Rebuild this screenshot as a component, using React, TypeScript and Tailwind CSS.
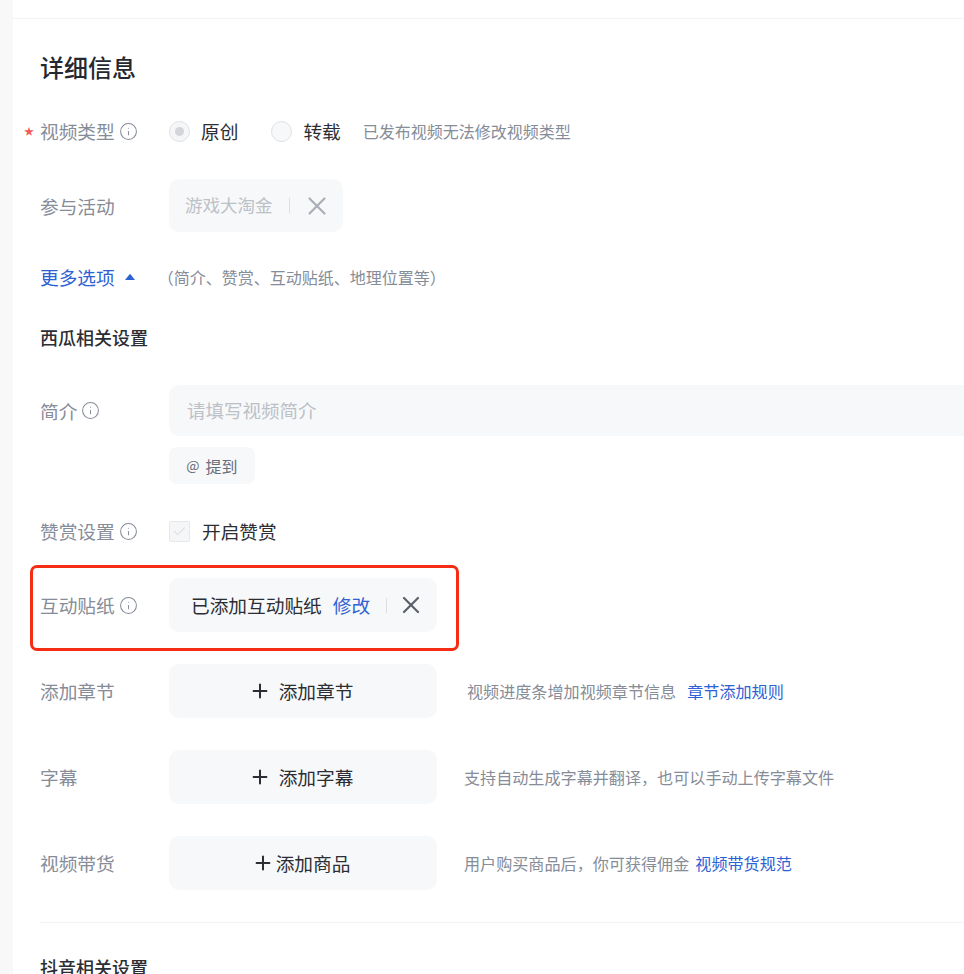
import { Check, Info, Plus, X } from 'lucide-react'
import type { ReactNode } from 'react'

const font = '[font-family:"Noto_Sans_CJK_SC","Liberation_Sans",sans-serif]'

function FieldLabel({ text, info }: { text: string; info?: boolean }) {
  return (
    <div className="flex w-[129px] shrink-0 items-center text-[18.7px] leading-6 text-[#868c98]">
      <span>{text}</span>
      {info && <Info className="ml-[4px] text-[#868c98]" size={19} strokeWidth={1.3} />}
    </div>
  )
}

function Divider() {
  return <span className="block h-[15px] w-px bg-[#dcdfe4]" />
}

function AddRow({
  label,
  action,
  tight,
  hintClass,
  children,
}: {
  label: string
  action: string
  tight?: boolean
  hintClass: string
  children: ReactNode
}) {
  return (
    <div className="flex h-[54px] items-center">
      <FieldLabel text={label} />
      <div className="flex h-[54px] w-[268px] shrink-0 items-center justify-center rounded-[10px] bg-[#f7f8f9] pr-[4px] text-[18.7px] text-[#2b2e34]">
        <Plus className={tight ? 'mr-[2px]' : 'mr-[8px]'} size={22} strokeWidth={2.2} />
        <span>{action}</span>
      </div>
      <div className={`flex items-center text-[16.1px] text-[#868c98] ${hintClass}`}>{children}</div>
    </div>
  )
}

export default function App() {
  return (
    <div className={`flex h-[974px] w-[964px] overflow-hidden bg-white ${font}`}>
      <div className="w-[13px] shrink-0 bg-[#f8f8f9]" />
      <div className="min-w-0 flex-1">
        <div className="h-[19px] border-b border-[#f2f3f5]" />
        <div className="pl-[27px]">
          <h1 className="mt-[31px] h-[34px] text-[24px] leading-[34px] font-medium text-[#25282e]">详细信息</h1>

          <div className="relative mt-[32px] flex h-[30px] items-center">
            <span className="absolute -left-[16px] top-[8px] text-[10px] leading-[14px] text-[#f25c5c]">★</span>
            <FieldLabel text="视频类型" info />
            <span className="flex h-[21px] w-[21px] items-center justify-center rounded-full border border-[#dfe1e5] bg-[#f5f6f8]">
              <span className="h-[9px] w-[9px] rounded-full bg-[#d3d5d9]" />
            </span>
            <span className="ml-[11px] text-[18.7px] text-[#2b2e34]">原创</span>
            <span className="ml-[33px] h-[21px] w-[21px] rounded-full border border-[#dfe1e5] bg-[#f7f8f9]" />
            <span className="ml-[11px] text-[18.7px] text-[#2b2e34]">转载</span>
            <span className="ml-[22px] text-[16px] text-[#868c98]">已发布视频无法修改视频类型</span>
          </div>

          <div className="mt-[33px] flex h-[53px] items-center">
            <FieldLabel text="参与活动" />
            <div className="flex h-[53px] w-[174px] items-center rounded-[10px] bg-[#f7f8f9] pl-[16px] text-[#bcc0c7]">
              <span className="text-[17.5px]">游戏大淘金</span>
              <span className="ml-[16px]"><Divider /></span>
              <X className="ml-[12px] text-[#a9aeb7]" size={30} strokeWidth={1.7} />
            </div>
          </div>

          <div className="mt-[33px] flex h-[24px] items-center">
            <span className="text-[18.7px] leading-6 text-[#2d62d4]">更多选项</span>
            <svg className="ml-[9px]" width="12" height="8" viewBox="0 0 12 8">
              <path d="M6 .8 11 7H1Z" fill="#2d62d4" />
            </svg>
            <span className="ml-[22px] text-[16px] text-[#868c98]">（简介、赞赏、互动贴纸、地理位置等）</span>
          </div>

          <h2 className="mt-[36px] h-[24px] text-[18px] leading-6 font-medium text-[#2b2e34]">西瓜相关设置</h2>

          <div className="mt-[36px] flex h-[51px] items-center">
            <FieldLabel text="简介" info />
            <div className="flex h-[51px] flex-1 items-center rounded-l-[10px] bg-[#f7f8f9] pl-[18px] text-[18.5px] text-[#bcc0c7]">
              请填写视频简介
            </div>
          </div>

          <div className="mt-[11px] ml-[129px] flex h-[37px] w-[86px] items-center justify-center rounded-[8px] bg-[#f7f8f9] text-[16px] text-[#686e7a]">
            <span className="mr-[6px] text-[14px]">@</span>
            <span>提到</span>
          </div>

          <div className="mt-[33px] flex h-[28px] items-center">
            <FieldLabel text="赞赏设置" info />
            <span className="flex h-[21px] w-[21px] items-center justify-center rounded-[2px] border border-[#e6e8eb] bg-[#f5f6f8]">
              <Check className="text-[#e0e2e6]" size={15} strokeWidth={2} />
            </span>
            <span className="ml-[12px] text-[18.7px] text-[#2b2e34]">开启赞赏</span>
          </div>

          <div className="relative mt-[33px] flex h-[54px] items-center">
            <FieldLabel text="互动贴纸" info />
            <div className="flex h-[54px] w-[268px] items-center rounded-[10px] bg-[#f7f8f9] pl-[22px] text-[18.7px] text-[#2b2e34]">
              <span>已添加互动贴纸</span>
              <span className="ml-[11px] text-[#2d62d4]">修改</span>
              <span className="ml-[16px] flex items-center"><Divider /></span>
              <X className="ml-[10px] text-[#5c626d]" size={28} strokeWidth={1.9} />
            </div>
            <div className="absolute -top-[13px] -left-[10px] h-[86px] w-[429px] rounded-[7px] border-[3px] border-[#f52d13]" />
          </div>

          <div className="mt-[32px] flex flex-col gap-[32px]">
            <AddRow label="添加章节" action="添加章节" hintClass="ml-[30px]">
              <span>视频进度条增加视频章节信息</span>
              <span className="ml-[11px] text-[#2d62d4]">章节添加规则</span>
            </AddRow>
            <AddRow label="字幕" action="添加字幕" hintClass="ml-[27px]">
              <span>支持自动生成字幕并翻译，也可以手动上传字幕文件</span>
            </AddRow>
            <AddRow label="视频带货" action="添加商品" tight hintClass="ml-[27px]">
              <span>用户购买商品后，你可获得佣金</span>
              <span className="ml-[6px] text-[#2d62d4]">视频带货规范</span>
            </AddRow>
          </div>

          <div className="mt-[32px] h-px bg-[#f2f3f5]" />
          <h2 className="mt-[32px] h-[24px] text-[18px] leading-6 font-medium text-[#2b2e34]">抖音相关设置</h2>
        </div>
      </div>
    </div>
  )
}
